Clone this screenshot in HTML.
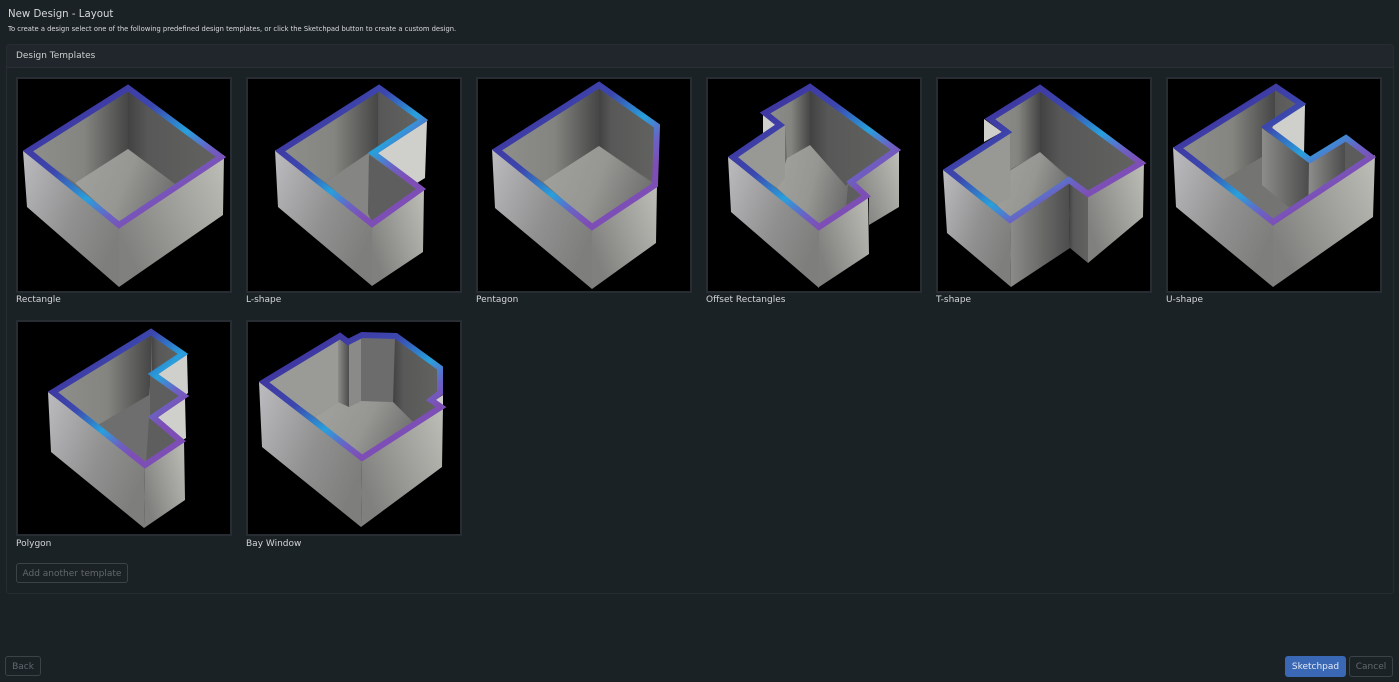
<!DOCTYPE html>
<html lang="en"><head><meta charset="utf-8"><title>New Design - Layout</title>
<style>
html,body{margin:0;padding:0;width:1399px;height:682px;overflow:hidden;background:#1b2226;font-family:"DejaVu Sans",sans-serif;color:#d8dadc}
.a{position:absolute;white-space:nowrap;line-height:1}
#panel{position:absolute;left:6px;top:44px;width:1386px;height:548px;border:1px solid #262c32;border-radius:3px}
#phead{position:absolute;left:7px;top:45px;width:1386px;height:22px;background:#20262b;border-bottom:1px solid #2a3036}
.tile{position:absolute;width:212px;height:212px;background:#000;border:2px solid #272d33}
.lbl{font-size:9px;color:#d4d6d8}
.btn{position:absolute;box-sizing:border-box;border:1px solid #3b4248;border-radius:3px;color:#62686d;font-size:9px;text-align:center;white-space:nowrap}
svg{position:absolute;left:0;top:0;filter:blur(.35px)}
.wl{fill:url(#wl)}.wr{fill:url(#wr)}.il{fill:url(#il)}.ir{fill:url(#ir)}.fl{fill:url(#fl)}.li{fill:#cfcfcb}
.d{fill:#5e5e5e}.k{fill:url(#dk)}.b{fill:#6e6e6c}
.r{fill:none;stroke:url(#rim);stroke-width:6;stroke-linejoin:miter;stroke-miterlimit:6}
</style></head><body>
<div class="a" style="left:8px;top:10px;font-size:10.2px;color:#d6d8da">New Design - Layout</div>
<div class="a" style="left:8px;top:26px;font-size:6.75px;color:#d8dadc">To create a design select one of the following predefined design templates, or click the Sketchpad button to create a custom design.</div>
<div id="panel"></div><div id="phead"></div>
<div class="a" style="left:16px;top:52px;font-size:8.96px;color:#cdd0d2">Design Templates</div>

<div class="tile" style="left:16px;top:77px"></div>
<div class="tile" style="left:246px;top:77px"></div>
<div class="tile" style="left:476px;top:77px"></div>
<div class="tile" style="left:706px;top:77px"></div>
<div class="tile" style="left:936px;top:77px"></div>
<div class="tile" style="left:1166px;top:77px"></div>
<div class="tile" style="left:16px;top:320px"></div>
<div class="tile" style="left:246px;top:320px"></div>

<svg width="1399" height="682" viewBox="0 0 1399 682">
<defs>
<linearGradient id="rim" x1=".2" y1=".2" x2=".75" y2=".78"><stop offset="0" stop-color="#3f38a2"/><stop offset=".32" stop-color="#3c48ae"/><stop offset=".64" stop-color="#28a0dc"/><stop offset=".85" stop-color="#6a62c4"/><stop offset="1" stop-color="#7d4fb6"/></linearGradient>
<linearGradient id="wl" x1="0" y1="0" x2="1" y2=".6"><stop offset="0" stop-color="#bcbcc0"/><stop offset=".6" stop-color="#909090"/><stop offset="1" stop-color="#7e7e7c"/></linearGradient>
<linearGradient id="wr" x1="0" y1=".6" x2="1" y2="0"><stop offset="0" stop-color="#80807e"/><stop offset="1" stop-color="#bfbfb9"/></linearGradient>
<linearGradient id="il" x1="0" y1="0" x2="1" y2="0"><stop offset="0" stop-color="#8e8e8a"/><stop offset=".55" stop-color="#848480"/><stop offset="1" stop-color="#464646"/></linearGradient>
<linearGradient id="ir" x1="0" y1="0" x2="1" y2="0"><stop offset="0" stop-color="#424242"/><stop offset=".22" stop-color="#585858"/><stop offset="1" stop-color="#626260"/></linearGradient>
<linearGradient id="fl" x1="0" y1=".3" x2="1" y2=".6"><stop offset="0" stop-color="#a0a09c"/><stop offset=".5" stop-color="#969692"/><stop offset="1" stop-color="#6e6e6e"/></linearGradient>
<linearGradient id="dk" x1="0" y1="0" x2="1" y2="0"><stop offset="0" stop-color="#8c8c8a"/><stop offset="1" stop-color="#4c4c4c"/></linearGradient>
</defs>

<!-- Rectangle -->
<polygon class="wl" points="23,151 119,225 119,287 27,207"/><polygon class="wr" points="119,225 224,155 223,215 119,287"/>
<path class="b" d="M28,151L128,88L221,157L119,225Z"/>
<polygon class="il" points="30,151 128,90 128,149 75,183"/><polygon class="ir" points="128,90 219,156 175,184 128,149"/><polygon class="fl" points="128,149 175,184 119,223 75,183"/>
<path class="r" d="M28,151L128,88L221,157L119,225Z"/>

<!-- L-shape -->
<polygon class="wl" points="275,150 372,224 372,286 278,207"/><polygon class="wr" points="372,224 424,189 423,252 372,286"/>
<polygon class="li" points="376,154 427,121 425,178 417,183"/>
<path class="b" d="M280,151L379,88L423,120L373,153L421,189L372,224Z"/>
<polygon class="il" points="280,151 378,90 378,148 368,153 325,182"/><polygon class="ir" points="378,90 421,120 369,152 378,146"/>
<polygon fill="#858583" points="369,153 368,214 372,222 325,182"/><polygon class="d" points="369,155 418,189 372,222 368,213"/>
<path class="r" d="M280,151L379,88L423,120L373,153L421,189L372,224Z"/>

<!-- Pentagon -->
<polygon class="wl" points="492,149 592,227 592,289 495,208"/><polygon class="wr" points="592,227 657,184 656,243 592,289"/>
<path class="b" d="M497,150L599,85L657,126L655,185L592,227Z"/>
<polygon class="il" points="499,150 599,86 599,146 543,182"/><polygon class="ir" points="599,86 656,126 654,183 599,146"/><polygon class="fl" points="599,146 652,183 592,225 543,182"/>
<path class="r" d="M497,150L599,85L657,126L655,185L592,227Z"/>

<!-- Offset Rectangles -->
<polygon class="li" points="763,113 781,126 763,138"/>
<polygon class="wl" points="728,157 819,228 819,288 731,212"/><polygon class="wr" points="819,228 868,195 869,254 819,287"/>
<polygon class="wr" points="853,182 899,150 899,207 869,225 869,196"/>
<path class="b" d="M733,157L780,125L765,113L810,87L896,150L851,182L866,196L819,227Z"/>
<polygon class="fl" points="810,145 848,183 846,207 819,226 777,188 787,158"/>
<polygon fill="#989894" points="735,158 785,125 785,178 777,188"/>
<polygon class="il" points="768,113 810,88 810,145 787,158 785,125"/><polygon class="ir" points="810,88 894,150 850,181 846,186 810,145"/>
<polygon class="d" points="848,185 864,195 846,207"/>
<path class="r" d="M733,157L780,125L765,113L810,87L896,150L851,182L866,196L819,227Z"/>

<!-- T-shape -->
<polygon class="li" points="984,119 1002,132 984,142"/>
<polygon class="wl" points="943,170 1010,221 1011,287 947,233"/><polygon fill="url(#dk)" points="1010,221 1069,181 1070,248 1011,287"/>
<polygon class="ir" points="1069,181 1088,195 1088,263 1070,248"/><polygon class="wr" points="1088,195 1144,161 1143,217 1088,263"/>
<path class="b" d="M948,170L1007,132L990,119L1040,88L1141,163L1088,194L1069,180L1010,220Z"/>
<polygon class="fl" points="1040,152 1068,178 1010,218 997,205 1011,170"/>
<polygon fill="#989894" points="950,169 1010,131 1011,197 997,205"/>
<polygon class="il" points="991,119 1040,90 1040,152 1011,169 1010,132"/><polygon class="ir" points="1040,90 1138,163 1088,192 1070,178 1040,152"/>
<path class="r" d="M948,170L1007,132L990,119L1040,88L1141,163L1088,194L1069,180L1010,220Z"/>

<!-- U-shape -->
<polygon class="wl" points="1173,147 1273,223 1273,287 1176,207"/><polygon class="wr" points="1273,223 1375,155 1373,217 1273,287"/>
<polygon class="li" points="1268,128 1305,105 1304,155 1310,160"/>
<path class="b" d="M1178,148L1276,87L1301,104L1266,127L1310,160L1346,138L1371,157L1273,222Z"/>
<polygon class="il" points="1180,147 1275,88 1275,120 1262,157 1223,180"/><polygon class="ir" points="1275,88 1299,103 1262,127 1262,157 1275,120"/>
<polygon fill="#747472" points="1223,180 1262,157 1262,185 1292,210 1273,222"/>
<polygon class="k" points="1262,128 1309,163 1308,197 1292,210 1262,185"/>
<polygon class="k" points="1309,163 1345,141 1345,172 1309,197"/><polygon fill="#5c5c5c" points="1345,141 1369,157 1345,172"/>
<path class="r" d="M1178,148L1276,87L1301,104L1266,127L1310,160L1346,138L1371,157L1273,222Z"/>

<!-- Polygon -->
<polygon class="li" points="157,375 187,354 188,393 184,396"/><polygon class="li" points="157,418 185,398 186,438 181,441"/>
<polygon class="wl" points="48,392 145,466 144,528 51,452"/><polygon class="wr" points="145,466 184,440 185,500 144,528"/>
<path class="b" d="M53,392L151,332L183,354L153,374L184,396L153,417L181,441L145,465Z"/>
<polygon class="il" points="53,392 151,333 151,375 149,395 98,425"/><polygon class="ir" points="151,333 181,354 152,372"/>
<polygon fill="#6e6e6e" points="98,425 150,395 149,462"/><polygon class="d" points="150,375 182,396 150,417"/><polygon fill="#5e5e5e" points="149,418 179,441 146,463"/>
<path class="r" d="M53,392L151,332L183,354L153,374L184,396L153,417L181,441L145,465Z"/>

<!-- Bay Window -->
<polygon class="li" points="434,401 443,395 443,407"/>
<polygon class="wl" points="259,382 362,459 361,527 262,447"/><polygon class="wr" points="362,459 443,406 442,467 361,527"/>
<path class="b" d="M264,382L340,336L348,342L362,335L396,336L440,368L440,393L431,400L441,407L362,458Z"/>
<polygon fill="#9a9a96" points="265,382 338,338 338,402 315,417"/><polygon class="k" points="338,338 349,345 349,407 338,402"/>
<polygon fill="#8a8a88" points="349,345 361,338 361,401 349,407"/><polygon fill="#6c6c6c" points="361,338 395,338 393,402 361,401"/>
<polygon class="ir" points="395,338 439,370 439,392 427,400 436,407 413,422 393,402"/>
<polygon class="fl" points="315,417 338,402 349,407 361,401 393,402 413,422 362,456"/>
<path class="r" d="M264,382L340,336L348,342L362,335L396,336L440,368L440,393L431,400L441,407L362,458Z"/>
</svg>

<div class="a lbl" style="left:16px;top:296px">Rectangle</div>
<div class="a lbl" style="left:246px;top:296px">L-shape</div>
<div class="a lbl" style="left:476px;top:296px">Pentagon</div>
<div class="a lbl" style="left:706px;top:296px">Offset Rectangles</div>
<div class="a lbl" style="left:936px;top:296px">T-shape</div>
<div class="a lbl" style="left:1166px;top:296px">U-shape</div>
<div class="a lbl" style="left:16px;top:540px">Polygon</div>
<div class="a lbl" style="left:246px;top:540px">Bay Window</div>

<div class="btn" style="left:16px;top:563px;width:112px;height:20px;line-height:20px">Add another template</div>
<div class="btn" style="left:5px;top:656px;width:36px;height:20px;line-height:20px">Back</div>
<div class="btn" style="left:1285px;top:656px;width:61px;height:21px;line-height:20px;background:#3a68b4;border-color:#3a68b4;color:#e2e9f5">Sketchpad</div>
<div class="btn" style="left:1349px;top:656px;width:44px;height:21px;line-height:20px">Cancel</div>
</body></html>
